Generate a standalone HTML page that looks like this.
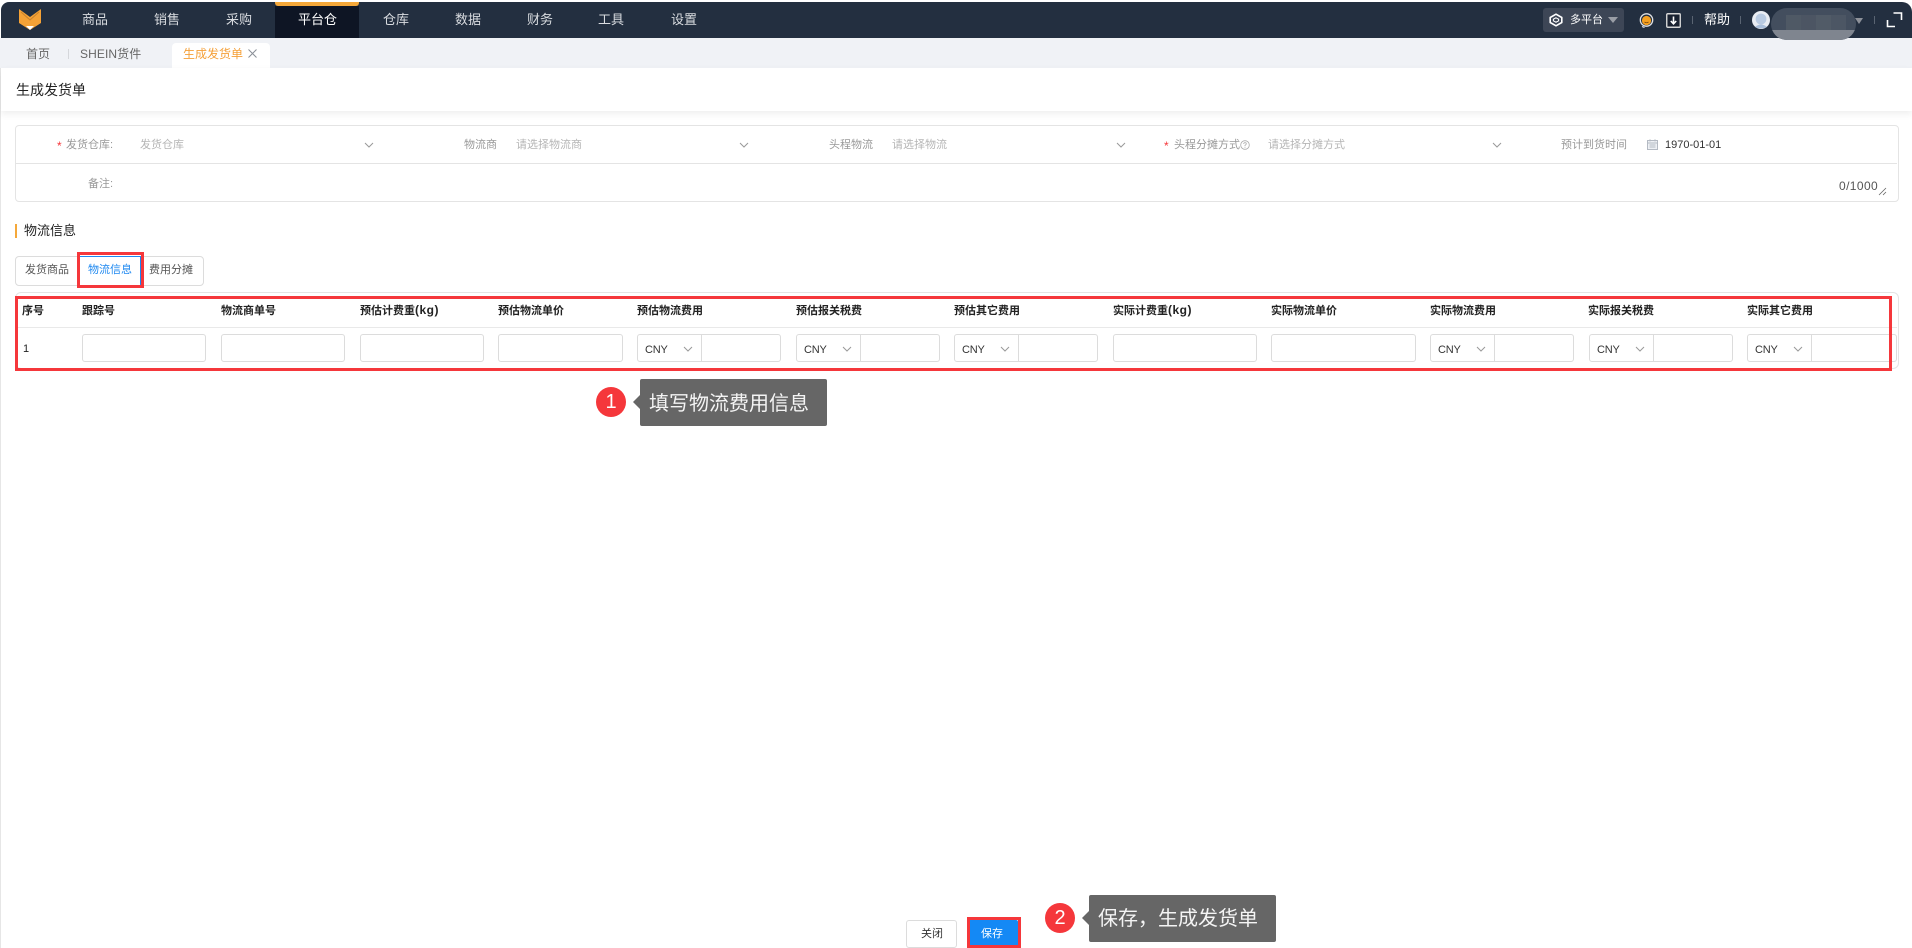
<!DOCTYPE html>
<html lang="zh-CN">
<head>
<meta charset="utf-8">
<title>生成发货单</title>
<style>
html{margin:0;padding:0;width:1912px;height:948px;overflow:hidden;background:#fff;}
body{margin:0;padding:0;background:#fff;width:1912px;height:948px;overflow:hidden;position:relative;font-family:"Liberation Sans","Noto Sans CJK SC",sans-serif;font-size:11px;color:#333;}
.a{position:absolute;}
.t{position:absolute;white-space:nowrap;line-height:20px;height:20px;}
.nav{color:#d9dce0;font-size:13px;}
.lb{color:#999;}
.ph{color:#b5b5b5;}
.th{font-weight:700;color:#222;}
.th span{font-size:12px;letter-spacing:.5px;line-height:0;vertical-align:baseline;}
.inp{position:absolute;top:334px;height:26px;border:1px solid #dcdcdc;border-radius:3px;background:#fff;}
.div{position:absolute;top:0;bottom:0;width:1px;background:#dcdcdc;}
.cny{position:absolute;left:7px;top:5px;line-height:20px;color:#333;letter-spacing:-.2px;}
.chev{position:absolute;width:10px;height:6px;}
.red{position:absolute;border:3px solid #f5373b;box-sizing:border-box;}
.tip{position:absolute;background:#666;border-radius:2px;color:#f4f4f4;font-size:20px;height:47px;white-space:nowrap;}
.tip:before{content:"";position:absolute;left:-7px;top:16px;border-style:solid;border-width:7px 7px 7px 0;border-color:transparent #666 transparent transparent;}
.num{position:absolute;width:30px;height:30px;border-radius:50%;background:#f5373b;color:#fff;font-size:20px;line-height:30px;text-align:center;}
</style>
</head>
<body>
<!-- left line -->
<div class="a" style="left:0;top:68px;width:1px;height:880px;background:#e6e6e6"></div>

<!-- header -->
<div class="a" style="left:1px;top:2px;width:1911px;height:36px;background:#232f40;border-radius:8px 10px 0 0"></div>
<div class="a" style="left:275px;top:6px;width:84px;height:32px;background:#0e1524"></div>
<div class="a" style="left:275px;top:2px;width:84px;height:4px;background:#f5a83a;border-radius:0 0 3px 3px"></div>
<svg class="a" style="left:18px;top:8px" width="24" height="23" viewBox="0 0 24 23">
<path d="M1 1 L12 9 L23 1 V15 L12 22 L1 15Z" fill="#f5a236"/>
<path d="M3 4 L12 12 L21 4" fill="none" stroke="#c9812a" stroke-width="1"/>
<path d="M8 18 H16 L12 22Z" fill="#fff"/>
</svg>
<div class="t nav" style="left:82px;top:10px">商品</div>
<div class="t nav" style="left:154px;top:10px">销售</div>
<div class="t nav" style="left:226px;top:10px">采购</div>
<div class="t nav" style="left:298px;top:10px;color:#fff">平台仓</div>
<div class="t nav" style="left:383px;top:10px">仓库</div>
<div class="t nav" style="left:455px;top:10px">数据</div>
<div class="t nav" style="left:527px;top:10px">财务</div>
<div class="t nav" style="left:598px;top:10px">工具</div>
<div class="t nav" style="left:671px;top:10px">设置</div>

<!-- header right -->
<div class="a" style="left:1543px;top:8px;width:81px;height:24px;background:#3d4656;border-radius:3px"></div>
<svg class="a" style="left:1549px;top:13px" width="14" height="14" viewBox="0 0 14 14">
<path d="M7 1.2 L12.8 4.5 V9.5 L7 12.8 L1.2 9.5 V4.5Z" fill="none" stroke="#fff" stroke-width="1.6" stroke-linejoin="round"/>
<path d="M7 4.8 L9.6 6.2 V7.8 L7 9.2 L4.4 7.8 V6.2Z" fill="none" stroke="#fff" stroke-width="1.1"/>
</svg>
<div class="t" style="left:1570px;top:10px;color:#fff">多平台</div>
<div class="a" style="left:1608px;top:17px;border-style:solid;border-width:6px 5px 0 5px;border-color:#9a9ea6 transparent transparent transparent"></div>
<svg class="a" style="left:1639px;top:13px" width="15" height="15" viewBox="0 0 15 15">
<circle cx="7.5" cy="7" r="6.2" fill="#232f40" stroke="#dfe1e4" stroke-width="1.3"/>
<circle cx="7.5" cy="7.5" r="4.6" fill="#f5a020"/>
<path d="M5.5 9 Q7.5 10.5 9.5 9" stroke="#7a4a10" stroke-width=".8" fill="none"/>
<path d="M3 13.5 L5.5 14.5" stroke="#dfe1e4" stroke-width="1.2"/>
</svg>
<svg class="a" style="left:1666px;top:13px" width="15" height="15" viewBox="0 0 15 15">
<rect x=".75" y=".75" width="13.5" height="13.5" rx="1" fill="#1a2231" stroke="#d8d8d8" stroke-width="1.4"/>
<path d="M7.5 3.5 V10.5 M4.8 8 L7.5 10.8 L10.2 8" stroke="#fff" stroke-width="1.6" fill="none"/>
</svg>
<div class="a" style="left:1692px;top:16px;width:1px;height:8px;background:#5a6472"></div>
<div class="t" style="left:1704px;top:10px;color:#fff;font-size:13px">帮助</div>
<div class="a" style="left:1740px;top:16px;width:1px;height:8px;background:#5a6472"></div>
<svg class="a" style="left:1752px;top:11px" width="18" height="18" viewBox="0 0 18 18">
<circle cx="9" cy="9" r="9" fill="#e9edf3"/>
<circle cx="9" cy="8" r="5.4" fill="#b9cbe2"/>
<path d="M3 16 Q9 11 15 16 Q9 19 3 16Z" fill="#a9bfdb"/>
</svg>
<!-- tabs bar -->
<div class="a" style="left:0;top:38px;width:1912px;height:30px;background:#f0f2f6"></div>
<!-- mosaic -->
<div class="a" style="left:1771px;top:8px;width:85px;height:32px;border-radius:17px;overflow:hidden;background:#434e5e">
  <div class="a" style="left:0;top:22px;width:85px;height:10px;background:#7f858f"></div>
  <div class="a" style="left:15px;top:7px;width:15px;height:15px;background:#4f5965"></div>
  <div class="a" style="left:30px;top:7px;width:15px;height:15px;background:#4c5563"></div>
  <div class="a" style="left:45px;top:7px;width:15px;height:15px;background:#515b67"></div>
  <div class="a" style="left:60px;top:7px;width:15px;height:15px;background:#4c5664"></div>
</div>
<div class="a" style="left:1855px;top:18px;border-style:solid;border-width:6px 4px 0 4px;border-color:#8d9199 transparent transparent transparent"></div>
<div class="a" style="left:1874px;top:16px;width:1px;height:8px;background:#5a6472"></div>
<svg class="a" style="left:1886px;top:11px" width="17" height="17" viewBox="0 0 17 17">
<path d="M7.5 2 H15.5 V9 M1.5 9 V15.5 H9" fill="none" stroke="#fff" stroke-width="1.6"/>
</svg>

<div class="a" style="left:172px;top:43px;width:98px;height:25px;background:#fff;border-radius:4px 4px 0 0"></div>
<div class="t" style="left:26px;top:44px;font-size:12px;color:#666">首页</div>
<div class="a" style="left:68px;top:49px;width:1px;height:10px;background:#d5d7db"></div>
<div class="t" style="left:80px;top:44px;font-size:12px;color:#666;letter-spacing:.1px">SHEIN货件</div>
<div class="t" style="left:183px;top:44px;font-size:12px;color:#f5a038">生成发货单</div>
<svg class="a" style="left:248px;top:49px" width="9" height="9" viewBox="0 0 9 9"><path d="M.5 .5 L8.5 8.5 M8.5 .5 L.5 8.5" stroke="#8a8f97" stroke-width="1"/></svg>

<!-- title bar -->
<div class="a" style="left:1px;top:68px;width:1911px;height:43px;background:#fff;box-shadow:0 3px 7px rgba(0,0,0,.07)"></div>
<div class="t" style="left:16px;top:80px;font-size:14px;line-height:20px;color:#222">生成发货单</div>

<!-- form box -->
<div class="a" style="left:15px;top:125px;width:1882px;height:75px;border:1px solid #e4e4e4;border-radius:4px;background:#fff"></div>
<div class="a" style="left:16px;top:163px;width:1881px;height:1px;background:#e4e4e4"></div>

<div class="t" style="left:57px;top:136px;color:#f5373b;font-size:12px">*</div>
<div class="t lb" style="left:66px;top:135px">发货仓库:</div>
<div class="t ph" style="left:140px;top:135px">发货仓库</div>
<svg class="chev" style="left:364px;top:142px" viewBox="0 0 10 6"><path d="M1 1 L5 5 L9 1" fill="none" stroke="#999" stroke-width="1"/></svg>

<div class="t lb" style="left:464px;top:135px">物流商</div>
<div class="t ph" style="left:516px;top:135px">请选择物流商</div>
<svg class="chev" style="left:739px;top:142px" viewBox="0 0 10 6"><path d="M1 1 L5 5 L9 1" fill="none" stroke="#999" stroke-width="1"/></svg>

<div class="t lb" style="left:829px;top:135px">头程物流</div>
<div class="t ph" style="left:892px;top:135px">请选择物流</div>
<svg class="chev" style="left:1116px;top:142px" viewBox="0 0 10 6"><path d="M1 1 L5 5 L9 1" fill="none" stroke="#999" stroke-width="1"/></svg>

<div class="t" style="left:1164px;top:136px;color:#f5373b;font-size:12px">*</div>
<div class="t lb" style="left:1174px;top:135px">头程分摊方式</div>
<svg class="a" style="left:1240px;top:140px" width="10" height="10" viewBox="0 0 10 10"><circle cx="5" cy="5" r="4.3" fill="none" stroke="#aaa" stroke-width=".8"/><path d="M3.7 4 Q3.8 2.6 5 2.6 Q6.3 2.6 6.3 3.8 Q6.3 4.6 5 5.3 V6.2 M5 7 V7.8" fill="none" stroke="#aaa" stroke-width=".8"/></svg>
<div class="t ph" style="left:1268px;top:135px">请选择分摊方式</div>
<svg class="chev" style="left:1492px;top:142px" viewBox="0 0 10 6"><path d="M1 1 L5 5 L9 1" fill="none" stroke="#999" stroke-width="1"/></svg>

<div class="t lb" style="left:1561px;top:135px">预计到货时间</div>
<svg class="a" style="left:1647px;top:139px" width="11" height="11" viewBox="0 0 11 11"><rect x=".5" y="1.5" width="10" height="9" fill="#eef1f5" stroke="#b4bac3"/><path d="M.5 4 H10.5 M2.5 6 H8.5 M2.5 8 H8.5 M3 .3 V2.5 M8 .3 V2.5" stroke="#b4bac3" stroke-width=".9"/></svg>
<div class="t" style="left:1665px;top:135px;color:#333">1970-01-01</div>

<div class="t lb" style="left:88px;top:174px">备注:</div>
<div class="t" style="left:1839px;top:176px;color:#555;font-size:12px;letter-spacing:.4px">0/1000</div>
<svg class="a" style="left:1878px;top:187px" width="9" height="9" viewBox="0 0 9 9"><path d="M1 8 L8 1 M5 8 L8 5" stroke="#666" stroke-width=".8"/></svg>

<!-- section title -->
<div class="a" style="left:15px;top:224px;width:2px;height:14px;background:#f5a83a"></div>
<div class="t" style="left:24px;top:221px;font-size:13px;color:#222">物流信息</div>

<!-- tabs -->
<div class="a" style="left:15px;top:256px;width:187px;height:28px;border:1px solid #dcdcdc;border-radius:4px;background:#fff"></div>
<div class="a" style="left:79px;top:256px;width:60px;height:28px;border:1px solid #1e88f0;background:#fff"></div>
<div class="t" style="left:25px;top:260px;color:#555">发货商品</div>
<div class="t" style="left:88px;top:260px;color:#1e88f0">物流信息</div>
<div class="t" style="left:149px;top:260px;color:#555">费用分摊</div>
<div class="red" style="left:77px;top:252px;width:67px;height:36px"></div>

<!-- table -->
<div class="a" style="left:15px;top:292px;width:1882px;height:75px;border:1px solid #e4e4e4;border-radius:6px"></div>
<div class="a" style="left:16px;top:327px;width:1881px;height:1px;background:#e9e9e9"></div>

<div class="t th" style="left:22px;top:301px">序号</div>
<div class="t th" style="left:82px;top:301px">跟踪号</div>
<div class="t th" style="left:221px;top:301px">物流商单号</div>
<div class="t th" style="left:360px;top:301px">预估计费重<span>(kg)</span></div>
<div class="t th" style="left:498px;top:301px">预估物流单价</div>
<div class="t th" style="left:637px;top:301px">预估物流费用</div>
<div class="t th" style="left:796px;top:301px">预估报关税费</div>
<div class="t th" style="left:954px;top:301px">预估其它费用</div>
<div class="t th" style="left:1113px;top:301px">实际计费重<span>(kg)</span></div>
<div class="t th" style="left:1271px;top:301px">实际物流单价</div>
<div class="t th" style="left:1430px;top:301px">实际物流费用</div>
<div class="t th" style="left:1588px;top:301px">实际报关税费</div>
<div class="t th" style="left:1747px;top:301px">实际其它费用</div>

<div class="t" style="left:23px;top:339px;color:#222">1</div>

<div class="inp" style="left:82px;width:122px"></div>
<div class="inp" style="left:221px;width:122px"></div>
<div class="inp" style="left:360px;width:122px"></div>
<div class="inp" style="left:498px;width:123px"></div>
<div class="inp" style="left:637px;width:142px"><span class="div" style="left:63px"></span><span class="cny">CNY</span><svg class="chev" style="left:45px;top:11px" viewBox="0 0 10 6"><path d="M1 1 L5 5 L9 1" fill="none" stroke="#999" stroke-width="1"/></svg></div>
<div class="inp" style="left:796px;width:142px"><span class="div" style="left:63px"></span><span class="cny">CNY</span><svg class="chev" style="left:45px;top:11px" viewBox="0 0 10 6"><path d="M1 1 L5 5 L9 1" fill="none" stroke="#999" stroke-width="1"/></svg></div>
<div class="inp" style="left:954px;width:142px"><span class="div" style="left:63px"></span><span class="cny">CNY</span><svg class="chev" style="left:45px;top:11px" viewBox="0 0 10 6"><path d="M1 1 L5 5 L9 1" fill="none" stroke="#999" stroke-width="1"/></svg></div>
<div class="inp" style="left:1113px;width:142px"></div>
<div class="inp" style="left:1271px;width:143px"></div>
<div class="inp" style="left:1430px;width:142px"><span class="div" style="left:63px"></span><span class="cny">CNY</span><svg class="chev" style="left:45px;top:11px" viewBox="0 0 10 6"><path d="M1 1 L5 5 L9 1" fill="none" stroke="#999" stroke-width="1"/></svg></div>
<div class="inp" style="left:1589px;width:142px"><span class="div" style="left:63px"></span><span class="cny">CNY</span><svg class="chev" style="left:45px;top:11px" viewBox="0 0 10 6"><path d="M1 1 L5 5 L9 1" fill="none" stroke="#999" stroke-width="1"/></svg></div>
<div class="inp" style="left:1747px;width:148px"><span class="div" style="left:63px"></span><span class="cny">CNY</span><svg class="chev" style="left:45px;top:11px" viewBox="0 0 10 6"><path d="M1 1 L5 5 L9 1" fill="none" stroke="#999" stroke-width="1"/></svg></div>

<div class="red" style="left:15px;top:296px;width:1877px;height:75px"></div>

<!-- annotation 1 -->
<div class="num" style="left:596px;top:387px">1</div>
<div class="tip" style="left:640px;top:379px;width:178px;padding-left:9px;line-height:50px">填写物流费用信息</div>

<!-- bottom buttons -->
<div class="a" style="left:906px;top:920px;width:49px;height:26px;border:1px solid #dcdcdc;border-radius:3px;background:#fff"></div>
<div class="t" style="left:921px;top:924px;color:#333">关闭</div>
<div class="a" style="left:967px;top:920px;width:51px;height:28px;background:#1489f5;border-radius:2px"></div>
<div class="t" style="left:981px;top:924px;color:#fff">保存</div>
<div class="red" style="left:967px;top:917px;width:54px;height:31px"></div>

<!-- annotation 2 -->
<div class="num" style="left:1045px;top:903px">2</div>
<div class="tip" style="left:1089px;top:895px;width:178px;padding-left:9px;line-height:48px">保存，生成发货单</div>
</body>
</html>
